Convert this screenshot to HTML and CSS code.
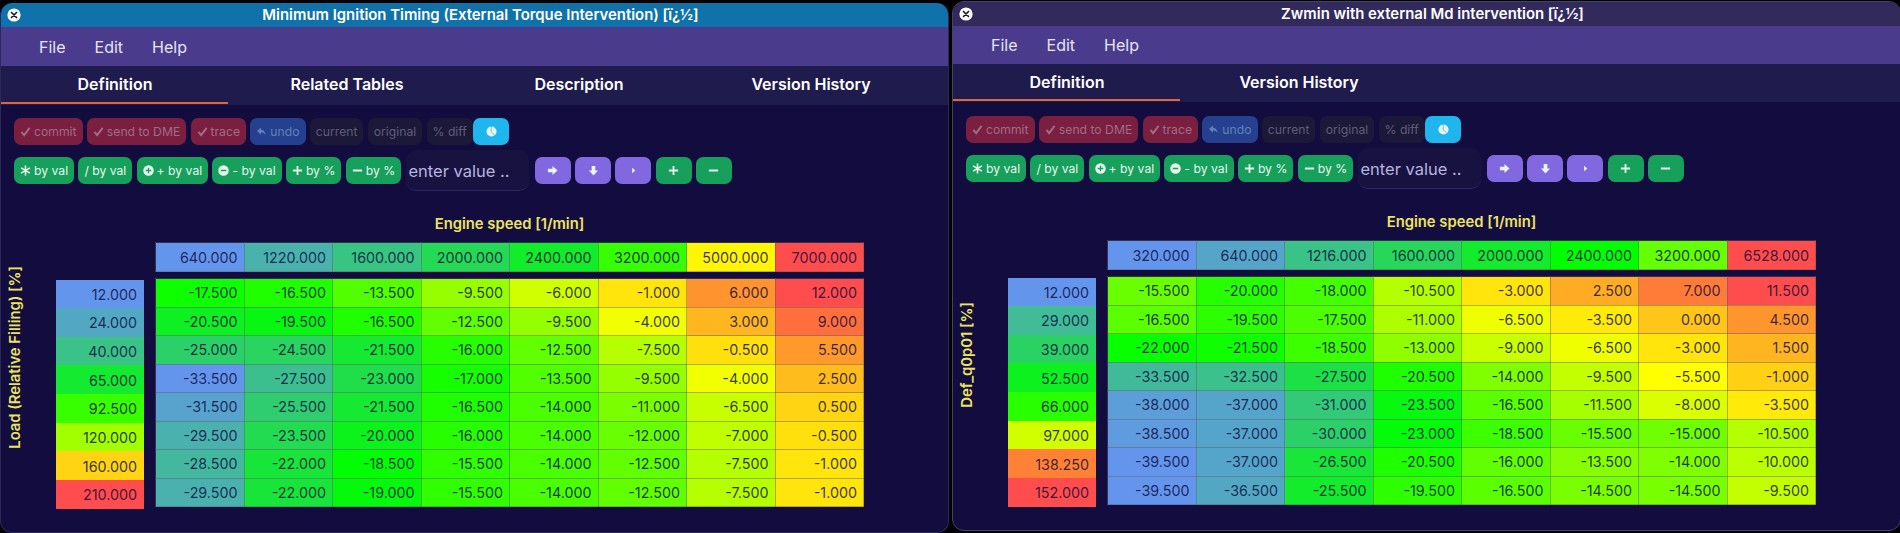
FILE: index.html
```html
<!DOCTYPE html>
<html lang="en">
<head>
  <meta charset="UTF-8">
  <title>Map editor</title>
  <link rel="stylesheet" href="styles.css">
</head>
<body>

  <svg class="sprite" xmlns="http://www.w3.org/2000/svg">
    <symbol id="i-close" viewBox="0 0 14 14"><circle cx="7" cy="7" r="6.6" fill="#fff"/><path d="M4.5 4.5l5 5M9.5 4.5l-5 5" stroke="#1a1a3a" stroke-width="1.7" stroke-linecap="round"/></symbol>
    <symbol id="i-check" viewBox="0 0 12 12"><path d="M1.5 6.5l3 3.5 6-8" fill="none" stroke="currentColor" stroke-width="2.2"/></symbol>
    <symbol id="i-undo" viewBox="0 0 12 12"><path d="M5.5 1.5L1 5.5l4.500 4V7c2 0 3.500.5 5 2.500C10 6 8 4 5.500 4z" fill="currentColor"/></symbol>
    <symbol id="i-star" viewBox="0 0 12 12"><path d="M6 .5v11M1.200 3.200l9.600 5.600M10.800 3.200l-9.600 5.600" stroke="currentColor" stroke-width="1.700"/></symbol>
    <symbol id="i-plus-c" viewBox="0 0 12 12"><circle cx="6" cy="6" r="5.700" fill="currentColor"/><path d="M6 3v6M3 6h6" stroke="#17a05c" stroke-width="1.500"/></symbol>
    <symbol id="i-minus-c" viewBox="0 0 12 12"><circle cx="6" cy="6" r="5.700" fill="currentColor"/><path d="M3 6h6" stroke="#17a05c" stroke-width="1.800"/></symbol>
    <symbol id="i-plus" viewBox="0 0 12 12"><path d="M6 1v10M1 6h10" stroke="currentColor" stroke-width="2"/></symbol>
    <symbol id="i-minus" viewBox="0 0 12 12"><path d="M1 6h10" stroke="currentColor" stroke-width="2"/></symbol>
    <symbol id="i-right" viewBox="0 0 12 12"><path d="M1 4h5V1l5.500 5L6 11V8H1z" fill="currentColor"/></symbol>
    <symbol id="i-down" viewBox="0 0 12 12"><path d="M4 1v5H1l5 5.500L11 6H8V1z" fill="currentColor"/></symbol>
    <symbol id="i-caret" viewBox="0 0 12 12"><path d="M4.500 3l3.500 3-3.500 3z" fill="currentColor"/></symbol>
    <symbol id="i-pie" viewBox="0 0 12 12"><circle cx="6" cy="6" r="5.500" fill="currentColor"/><path d="M5.700 0v6.300L9.500 10" fill="none" stroke="#1fb6ee" stroke-width=".8"/></symbol>
  </svg>

  <!-- left window -->
  <div class="win win-left">
    <div class="titlebar">
      <svg class="close"><use href="#i-close"/></svg>
      <span>Minimum Ignition Timing (External Torque Intervention) [ï¿½]</span>
    </div>
    <div class="menubar">
      <span>File</span><span>Edit</span><span>Help</span>
    </div>
    <div class="tabs">
      <div class="tab active">Definition</div>
      <div class="tab">Related Tables</div>
      <div class="tab">Description</div>
      <div class="tab">Version History</div>
    </div>
    <div class="toolbar">
      <div class="tool-row">
        <button class="btn off-red"><svg class="ico"><use href="#i-check"/></svg>commit</button>
        <button class="btn off-red"><svg class="ico"><use href="#i-check"/></svg>send to DME</button>
        <button class="btn off-red"><svg class="ico"><use href="#i-check"/></svg>trace</button>
        <button class="btn off-blue"><svg class="ico"><use href="#i-undo"/></svg>undo</button>
        <button class="btn off-dark">current</button>
        <button class="btn off-dark">original</button>
        <button class="btn off-dark">% diff</button>
        <button class="btn cyan square"><svg class="ico"><use href="#i-pie"/></svg></button>
      </div>
      <div class="tool-row">
        <button class="btn green"><svg class="ico"><use href="#i-star"/></svg>by val</button>
        <button class="btn green">/ by val</button>
        <button class="btn green"><svg class="ico"><use href="#i-plus-c"/></svg>+ by val</button>
        <button class="btn green"><svg class="ico"><use href="#i-minus-c"/></svg>- by val</button>
        <button class="btn green"><svg class="ico"><use href="#i-plus"/></svg>by %</button>
        <button class="btn green"><svg class="ico"><use href="#i-minus"/></svg>by %</button>
        <input class="value-input" type="text" placeholder="enter value ..">
        <button class="btn purple square"><svg class="ico"><use href="#i-right"/></svg></button>
        <button class="btn purple square"><svg class="ico"><use href="#i-down"/></svg></button>
        <button class="btn purple square"><svg class="ico"><use href="#i-caret"/></svg></button>
        <button class="btn green square"><svg class="ico"><use href="#i-plus"/></svg></button>
        <button class="btn green square"><svg class="ico"><use href="#i-minus"/></svg></button>
      </div>
    </div>
    <div class="map">
      <div class="y-label"><span>Load (Relative Filling) [%]</span></div>
      <div class="x-label">Engine speed [1/min]</div>
      <table class="axis-x heat">
        <tr><td>640.000</td><td>1220.000</td><td>1600.000</td><td>2000.000</td><td>2400.000</td><td>3200.000</td><td>5000.000</td><td>7000.000</td></tr>
      </table>
      <table class="axis-y heat">
        <tr><td>12.000</td></tr>
        <tr><td>24.000</td></tr>
        <tr><td>40.000</td></tr>
        <tr><td>65.000</td></tr>
        <tr><td>92.500</td></tr>
        <tr><td>120.000</td></tr>
        <tr><td>160.000</td></tr>
        <tr><td>210.000</td></tr>
      </table>
      <table class="cells heat">
        <tr><td>-17.500</td><td>-16.500</td><td>-13.500</td><td>-9.500</td><td>-6.000</td><td>-1.000</td><td>6.000</td><td>12.000</td></tr>
        <tr><td>-20.500</td><td>-19.500</td><td>-16.500</td><td>-12.500</td><td>-9.500</td><td>-4.000</td><td>3.000</td><td>9.000</td></tr>
        <tr><td>-25.000</td><td>-24.500</td><td>-21.500</td><td>-16.000</td><td>-12.500</td><td>-7.500</td><td>-0.500</td><td>5.500</td></tr>
        <tr><td>-33.500</td><td>-27.500</td><td>-23.000</td><td>-17.000</td><td>-13.500</td><td>-9.500</td><td>-4.000</td><td>2.500</td></tr>
        <tr><td>-31.500</td><td>-25.500</td><td>-21.500</td><td>-16.500</td><td>-14.000</td><td>-11.000</td><td>-6.500</td><td>0.500</td></tr>
        <tr><td>-29.500</td><td>-23.500</td><td>-20.000</td><td>-16.000</td><td>-14.000</td><td>-12.000</td><td>-7.000</td><td>-0.500</td></tr>
        <tr><td>-28.500</td><td>-22.000</td><td>-18.500</td><td>-15.500</td><td>-14.000</td><td>-12.500</td><td>-7.500</td><td>-1.000</td></tr>
        <tr><td>-29.500</td><td>-22.000</td><td>-19.000</td><td>-15.500</td><td>-14.000</td><td>-12.500</td><td>-7.500</td><td>-1.000</td></tr>
      </table>
    </div>
  </div>

  <!-- right window -->
  <div class="win win-right">
    <div class="titlebar">
      <svg class="close"><use href="#i-close"/></svg>
      <span>Zwmin with external Md intervention [ï¿½]</span>
    </div>
    <div class="menubar">
      <span>File</span><span>Edit</span><span>Help</span>
    </div>
    <div class="tabs">
      <div class="tab active">Definition</div>
      <div class="tab">Version History</div>
    </div>
    <div class="toolbar">
      <div class="tool-row">
        <button class="btn off-red"><svg class="ico"><use href="#i-check"/></svg>commit</button>
        <button class="btn off-red"><svg class="ico"><use href="#i-check"/></svg>send to DME</button>
        <button class="btn off-red"><svg class="ico"><use href="#i-check"/></svg>trace</button>
        <button class="btn off-blue"><svg class="ico"><use href="#i-undo"/></svg>undo</button>
        <button class="btn off-dark">current</button>
        <button class="btn off-dark">original</button>
        <button class="btn off-dark">% diff</button>
        <button class="btn cyan square"><svg class="ico"><use href="#i-pie"/></svg></button>
      </div>
      <div class="tool-row">
        <button class="btn green"><svg class="ico"><use href="#i-star"/></svg>by val</button>
        <button class="btn green">/ by val</button>
        <button class="btn green"><svg class="ico"><use href="#i-plus-c"/></svg>+ by val</button>
        <button class="btn green"><svg class="ico"><use href="#i-minus-c"/></svg>- by val</button>
        <button class="btn green"><svg class="ico"><use href="#i-plus"/></svg>by %</button>
        <button class="btn green"><svg class="ico"><use href="#i-minus"/></svg>by %</button>
        <input class="value-input" type="text" placeholder="enter value ..">
        <button class="btn purple square"><svg class="ico"><use href="#i-right"/></svg></button>
        <button class="btn purple square"><svg class="ico"><use href="#i-down"/></svg></button>
        <button class="btn purple square"><svg class="ico"><use href="#i-caret"/></svg></button>
        <button class="btn green square"><svg class="ico"><use href="#i-plus"/></svg></button>
        <button class="btn green square"><svg class="ico"><use href="#i-minus"/></svg></button>
      </div>
    </div>
    <div class="map">
      <div class="y-label"><span>Def_q0p01 [%]</span></div>
      <div class="x-label">Engine speed [1/min]</div>
      <table class="axis-x heat">
        <tr><td>320.000</td><td>640.000</td><td>1216.000</td><td>1600.000</td><td>2000.000</td><td>2400.000</td><td>3200.000</td><td>6528.000</td></tr>
      </table>
      <table class="axis-y heat">
        <tr><td>12.000</td></tr>
        <tr><td>29.000</td></tr>
        <tr><td>39.000</td></tr>
        <tr><td>52.500</td></tr>
        <tr><td>66.000</td></tr>
        <tr><td>97.000</td></tr>
        <tr><td>138.250</td></tr>
        <tr><td>152.000</td></tr>
      </table>
      <table class="cells heat">
        <tr><td>-15.500</td><td>-20.000</td><td>-18.000</td><td>-10.500</td><td>-3.000</td><td>2.500</td><td>7.000</td><td>11.500</td></tr>
        <tr><td>-16.500</td><td>-19.500</td><td>-17.500</td><td>-11.000</td><td>-6.500</td><td>-3.500</td><td>0.000</td><td>4.500</td></tr>
        <tr><td>-22.000</td><td>-21.500</td><td>-18.500</td><td>-13.000</td><td>-9.000</td><td>-6.500</td><td>-3.000</td><td>1.500</td></tr>
        <tr><td>-33.500</td><td>-32.500</td><td>-27.500</td><td>-20.500</td><td>-14.000</td><td>-9.500</td><td>-5.500</td><td>-1.000</td></tr>
        <tr><td>-38.000</td><td>-37.000</td><td>-31.000</td><td>-23.500</td><td>-16.500</td><td>-11.500</td><td>-8.000</td><td>-3.500</td></tr>
        <tr><td>-38.500</td><td>-37.000</td><td>-30.000</td><td>-23.000</td><td>-18.500</td><td>-15.500</td><td>-15.000</td><td>-10.500</td></tr>
        <tr><td>-39.500</td><td>-37.000</td><td>-26.500</td><td>-20.500</td><td>-16.000</td><td>-13.500</td><td>-14.000</td><td>-10.000</td></tr>
        <tr><td>-39.500</td><td>-36.500</td><td>-25.500</td><td>-19.500</td><td>-16.500</td><td>-14.500</td><td>-14.500</td><td>-9.500</td></tr>
      </table>
    </div>
  </div>

  <script src="heat.js"></script>
</body>
</html>
```

FILE: styles.css
```css
* { margin: 0; padding: 0; box-sizing: border-box; }
html, body { height: 100%; }
body {
  background: #000;
  display: flex;
  gap: 2px;
  font-family: Inter, "Liberation Sans", sans-serif;
  color: #fff;
  overflow: hidden;
}
.sprite { display: none; }

/* windows */
.win {
  position: relative;
  width: 949px;
  height: 530px;
  background: #120d3e;
  border: 1px solid #45426a;
  border-radius: 12px;
  overflow: hidden;
  flex: none;
}
.win-left { margin-top: 3px; margin-right: 1px; border-color: #2c2958; border-top: none; }
.win-right { margin-top: 1px; }

.titlebar {
  height: 24px;
  display: flex;
  align-items: center;
  justify-content: center;
  padding-left: 12px;
  font-size: 14.9px;
  font-weight: 600;
  background: #0f72aa;
}
.win-right .titlebar { height: 24px; background: #332a5c; }
.close {
  position: absolute;
  left: 6px;
  top: 5px;
  width: 14px;
  height: 14px;
}
.win-right .close { left: 6px; top: 5px; }

.menubar {
  height: 39px;
  display: flex;
  align-items: center;
  gap: 29px;
  padding-left: 38px;
  font-size: 16px;
  color: #e6e4f6;
  background: #4a3b8c;
}
.win-right .menubar { height: 38px; }

.tabs {
  height: 39px;
  display: flex;
  margin-left: -2px;
  padding-left: 0;
  background: #1f1b4d;
}
.win-right .tabs { height: 38px; }
.tab {
  width: 232px;
  padding-top: 8px;
  text-align: center;
  font-size: 16px;
  font-weight: 600;
}
.tab.active { position: relative; }
.tab.active::after {
  content: "";
  position: absolute;
  left: 2px;
  right: 3px;
  bottom: 1px;
  height: 2px;
  background: #d9683f;
}

/* toolbar */
.toolbar {
  padding: 13px 13px 0;
  display: flex;
  flex-direction: column;
  gap: 12px;
}
.win-right .toolbar { padding-top: 14px; }
.tool-row {
  height: 27px;
  display: flex;
  gap: 4.3px;
}
.btn {
  height: 27px;
  display: flex;
  align-items: center;
  gap: 3px;
  padding: 0 6px;
  border: none;
  border-radius: 7px;
  font-family: inherit;
  font-size: 12.2px;
  color: #e8f5ee;
  white-space: nowrap;
}
.ico { width: 11px; height: 11px; flex: none; }
.square { width: 36px; justify-content: center; padding: 0; }
.off-red { background: #7a1f40; color: #a06c84; }
.off-blue { background: #25408f; color: #5f80b8; }
.off-dark { background: #1c1838; color: #5f5d7a; padding: 0 6px; }
.green { background: #17a05c; }
.purple { background: #8268e0; }
.cyan { background: #1fb6ee; margin-left: -4px; }

.value-input {
  width: 123px;
  height: 41px;
  margin: -7px 1px;
  padding: 2px 2px 0 2px;
  border: none;
  border-bottom: 1px solid #2e2a60;
  border-radius: 10px;
  background: #17123f;
  font-family: inherit;
  font-size: 16.5px;
  color: #b8b4e0;
  outline: none;
}
.value-input::placeholder { color: #b8b4e0; opacity: 1; }

/* map grid */
.map {
  margin-top: 23px;
  padding-left: 3px;
  display: grid;
  grid-template-columns: 22px 29px 89px 11px 709px;
  grid-template-rows: 35px 30px 6px 229px;
}
.y-label {
  grid-column: 1;
  grid-row: 1 / 5;
  display: flex;
  align-items: center;
  justify-content: center;
}
.y-label span,
.x-label {
  font-size: 14.8px;
  font-weight: 600;
  color: #ece45f;
  white-space: nowrap;
}
.y-label span { writing-mode: vertical-rl; transform: rotate(180deg); }
.x-label {
  grid-column: 5;
  grid-row: 1;
  padding-top: 8px;
  text-align: center;
}
.axis-x { grid-column: 5; grid-row: 2; height: 30px; }
.axis-y { grid-column: 3; grid-row: 4; height: 230px; margin-top: 1px; }
.cells { grid-column: 5; grid-row: 4; height: 229px; }

table {
  width: 100%;
  table-layout: fixed;
  border-collapse: collapse;
  border: 1px solid rgba(190, 190, 210, 0.65);
}
td {
  padding-right: 6px;
  text-align: right;
  font-size: 14.3px;
  color: rgba(14, 10, 60, 0.82);
  border: 1px solid rgba(90, 90, 100, 0.45);
}
.axis-x td { padding-top: 1px; }
.axis-y td { border-color: transparent; padding-top: 1px; }
```

FILE: heat.js
```js
// colour each table from its own min/max
const stops = [
  [100, 149, 237],
  [0, 255, 0],
  [255, 255, 0],
  [255, 76, 76]
];

function heatColor(t) {
  const pos = Math.min(t * 3, 2.999);
  const i = Math.floor(pos);
  const f = pos - i;
  const c = stops[i].map((v, k) => Math.round(v + (stops[i + 1][k] - v) * f));
  return `rgb(${c.join(",")})`;
}

document.querySelectorAll(".heat").forEach(table => {
  const cells = [...table.querySelectorAll("td")];
  const vals = cells.map(td => parseFloat(td.textContent));
  const min = Math.min(...vals);
  const max = Math.max(...vals);
  cells.forEach((td, i) => {
    td.style.background = heatColor((vals[i] - min) / (max - min));
  });
});
```
